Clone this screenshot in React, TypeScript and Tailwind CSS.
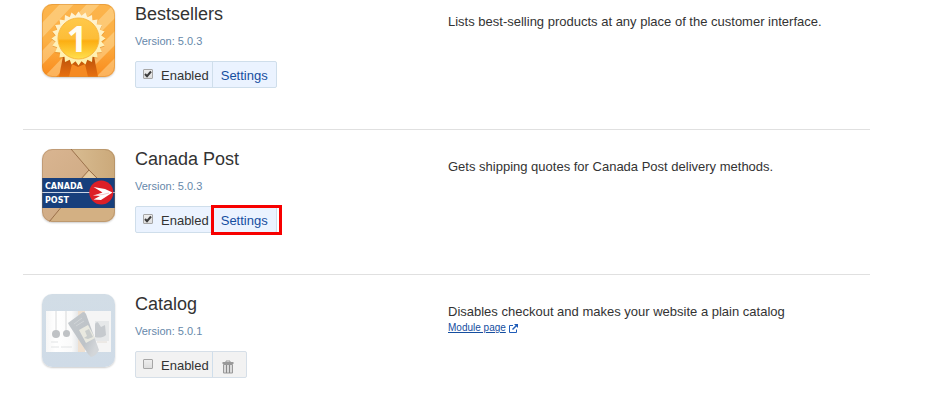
import React from "react";

type Module = {
  id: string;
  name: string;
  version: string;
  enabled: boolean;
  highlighted?: boolean;
  description: string;
  pageLink?: boolean;
  icon: React.ReactNode;
};

function starPoints(cx: number, cy: number, outer: number, inner: number, count: number) {
  const points: string[] = [];
  for (let i = 0; i < count * 2; i++) {
    const r = i % 2 === 0 ? outer : inner;
    const a = (Math.PI * i) / count - Math.PI / 2;
    points.push(`${(cx + r * Math.cos(a)).toFixed(2)},${(cy + r * Math.sin(a)).toFixed(2)}`);
  }
  return points.join(" ");
}

function BestsellersIcon() {
  return (
    <svg viewBox="0 0 73 73" className="block size-full" aria-hidden="true">
      <defs>
        <linearGradient id="bs-bg" x1="0" y1="0" x2="0" y2="1">
          <stop offset="0" stopColor="#fcb44c" />
          <stop offset="0.5" stopColor="#fcb044" />
          <stop offset="1" stopColor="#f98a1c" />
        </linearGradient>
        <linearGradient id="bs-disc" x1="0" y1="0" x2="0" y2="1">
          <stop offset="0" stopColor="#ffc94a" />
          <stop offset="0.5" stopColor="#fdbd38" />
          <stop offset="0.56" stopColor="#fcae12" />
          <stop offset="1" stopColor="#ffe04e" />
        </linearGradient>
        <linearGradient id="bs-star" x1="0" y1="0" x2="0" y2="1">
          <stop offset="0" stopColor="#fff3d6" />
          <stop offset="1" stopColor="#fff0a8" />
        </linearGradient>
        <linearGradient id="bs-ribbon" x1="0" y1="0" x2="0" y2="1">
          <stop offset="0" stopColor="#b9500a" />
          <stop offset="1" stopColor="#e8700f" />
        </linearGradient>
        <clipPath id="bs-clip">
          <rect width="73" height="73" rx="10" />
        </clipPath>
      </defs>
      <g clipPath="url(#bs-clip)">
        <rect width="73" height="73" fill="url(#bs-bg)" />
        <g fill="#ffe3a8" opacity="0.45">
          <path d="M0 0h7L0 8zM18 0h14L0 34V19zM45 0h13L0 61V47zM72 0h1v14L14 73H2zM73 27v14L41 73H27zM73 54v13l-6 6H54z" />
        </g>
        <path d="M21 52H52L56 73H17z" fill="url(#bs-ribbon)" />
        <path d="M30 60 36 63 43 60 46 73H27z" fill="#f58a22" />
        <polygon points={starPoints(36.5, 35.5, 27, 23, 24)} fill="#c76a05" opacity="0.35" />
        <polygon points={starPoints(36.5, 34.5, 27, 23, 24)} fill="url(#bs-star)" />
        <circle cx="36.5" cy="34.5" r="20.5" fill="url(#bs-disc)" stroke="#f9b840" strokeWidth="1" />
        <text x="35" y="47.5" textAnchor="middle" fontFamily="Open Sans, sans-serif" fontWeight="700" fontSize="36" fill="#fffdf3">
          1
        </text>
      </g>
      <rect x="0.5" y="0.5" width="72" height="72" rx="10" fill="none" stroke="#d98a2c" strokeOpacity="0.5" />
    </svg>
  );
}

function CanadaPostIcon() {
  return (
    <svg viewBox="0 0 73 73" className="block size-full" aria-hidden="true">
      <defs>
        <linearGradient id="cp-a" x1="0" y1="0" x2="1" y2="1">
          <stop offset="0" stopColor="#d9b591" />
          <stop offset="1" stopColor="#c9a47c" />
        </linearGradient>
        <linearGradient id="cp-b" x1="0" y1="0" x2="1" y2="0">
          <stop offset="0" stopColor="#dcc198" />
          <stop offset="1" stopColor="#cba97a" />
        </linearGradient>
        <clipPath id="cp-clip">
          <rect width="73" height="73" rx="10" />
        </clipPath>
      </defs>
      <g clipPath="url(#cp-clip)">
        <rect width="73" height="73" fill="url(#cp-a)" />
        <path d="M29 0H73V56H17L47 21z" fill="url(#cp-b)" />
        <path d="M7 73 21 56H73V73z" fill="#d3b083" />
        <path d="M29 0 47 21 38 31M7 73 21 56M47 21l9 9" stroke="#9b714b" strokeWidth="1" fill="none" />
        <path d="M40 30 47 22 55 30z" fill="#e5cba2" />
        <rect y="29" width="73" height="30" fill="#173f7c" />
        <rect y="43" width="73" height="1" fill="#c8d3e4" />
        <circle cx="59.3" cy="43.5" r="12" fill="#dd1f27" />
        <path d="M51.5 38 63 40 70.5 43.5 59 51 51.5 50.5 58 47 51.5 46.5 60.5 43.5z" fill="#fff" />
        <path d="M51.5 46.5 61 45.5 67 44" stroke="#e9a0a3" strokeWidth="0.6" fill="none" />
        <g fill="#fff" fontFamily="DejaVu Sans, sans-serif" fontWeight="700" fontSize="8">
          <text x="3" y="40">CANADA</text>
          <text x="3" y="54">POST</text>
        </g>
      </g>
      <rect x="0.5" y="0.5" width="72" height="72" rx="10" fill="none" stroke="#94704b" strokeOpacity="0.35" />
    </svg>
  );
}

function CatalogIcon() {
  return (
    <svg viewBox="0 0 73 73" className="block size-full" aria-hidden="true">
      <defs>
        <linearGradient id="ct-bg" x1="0" y1="0" x2="0" y2="1">
          <stop offset="0" stopColor="#d2dde6" />
          <stop offset="1" stopColor="#cfdbe7" />
        </linearGradient>
        <linearGradient id="ct-page" x1="0" y1="0" x2="1" y2="0">
          <stop offset="0" stopColor="#f6f6f6" />
          <stop offset="0.3" stopColor="#ffffff" />
          <stop offset="0.8" stopColor="#fafafa" />
          <stop offset="1" stopColor="#e6e8ea" />
        </linearGradient>
        <linearGradient id="ct-tube" x1="0" y1="0" x2="1" y2="0.6">
          <stop offset="0" stopColor="#c3c8cc" />
          <stop offset="0.7" stopColor="#bec3c8" />
          <stop offset="1" stopColor="#d3d6d9" />
        </linearGradient>
      </defs>
      <rect width="73" height="73" rx="10" fill="url(#ct-bg)" />
      <rect x="4" y="17" width="32" height="41" fill="url(#ct-page)" />
      <rect x="36" y="17" width="33" height="41" fill="#f5f5f5" />
      <rect x="36" y="17" width="7" height="41" fill="#efe0d0" />
      <rect x="53" y="27" width="14" height="20" fill="#e6e8e9" />
      <path d="M14 17V37M24 17V37" stroke="#d8d9da" strokeWidth="1" />
      <circle cx="14" cy="40" r="4" fill="#bfc2c5" />
      <circle cx="24.5" cy="39.5" r="3.5" fill="#bfc2c5" />
      <path d="M9 48h7M9 53h8m2 0h11" stroke="#e2e4e5" strokeWidth="1" />
      <path d="M53 31c0-3 3-4 4-1l2 3 4-2 1 10c-3 3-8 3-11 2z" fill="#c6cace" />
      <path d="M55 48h10" stroke="#e3ddd6" strokeWidth="1" />
      <path d="M26 29 41 18Q43 18 44 20L57 56Q54 62 49 63L46 60 27 31z" fill="url(#ct-tube)" />
      <path d="M37 36 46 31 53 44 44 49z" fill="#e9e9e0" />
      <path d="M43 37 47 35 51 43 46 45 42 44 45 42z" fill="#c9cdcc" />
      <path d="M32 30 40 24M34 32 42 27" stroke="#d0d4d7" strokeWidth="1" />
    </svg>
  );
}

function TrashIcon() {
  return (
    <svg viewBox="0 0 12 14" className="block h-[14px] w-[12px]" aria-hidden="true">
      <path d="M4 2V1h4v1" fill="none" stroke="#999" strokeWidth="1" />
      <rect x="0.5" y="2" width="11" height="2" fill="#999" />
      <path d="M1.5 4.5h9v8.5h-9z" fill="#dadada" stroke="#999" strokeWidth="1" />
      <path d="M4.5 5v8M7.5 5v8" stroke="#8a8a8a" strokeWidth="1" />
    </svg>
  );
}

function ExternalIcon() {
  return (
    <svg viewBox="0 0 9 9" className="block size-[9px]" fill="none" stroke="#1f5cb8" aria-hidden="true">
      <path d="M4 1.5H.5v7h7V5.5" />
      <path d="M3.5 5.5 7.5 1.5" strokeWidth="1.4" />
      <path d="M5 0h4v4z" fill="#1f5cb8" stroke="none" />
    </svg>
  );
}

const modules: Module[] = [
  {
    id: "bestsellers",
    name: "Bestsellers",
    version: "5.0.3",
    enabled: true,
    description: "Lists best-selling products at any place of the customer interface.",
    icon: <BestsellersIcon />,
  },
  {
    id: "canada-post",
    name: "Canada Post",
    version: "5.0.3",
    enabled: true,
    highlighted: true,
    description: "Gets shipping quotes for Canada Post delivery methods.",
    icon: <CanadaPostIcon />,
  },
  {
    id: "catalog",
    name: "Catalog",
    version: "5.0.1",
    enabled: false,
    description: "Disables checkout and makes your website a plain catalog",
    pageLink: true,
    icon: <CatalogIcon />,
  },
];

function EnabledToggle({ id, checked }: { id: string; checked: boolean }) {
  return (
    <label htmlFor={id} className="flex items-center gap-2 pt-0.5 pr-[3px] pl-[7px] text-[13px] leading-4">
      <span className="-mt-1 grid size-[10px] shrink-0">
        <input
          id={id}
          type="checkbox"
          defaultChecked={checked}
          className="peer col-start-1 row-start-1 size-[10px] appearance-none rounded-[1px] border border-[#a6a6a6] bg-linear-to-b from-[#eeeeee] to-[#dedede]"
        />
        <svg
          viewBox="0 0 10 10"
          className="pointer-events-none invisible col-start-1 row-start-1 size-[10px] peer-checked:visible"
          aria-hidden="true"
        >
          <path d="M2 5 4 7.2 8 2.5" fill="none" stroke="#3c3c3c" strokeWidth="2" />
        </svg>
      </span>
      Enabled
    </label>
  );
}

const highlightFrame =
  "after:pointer-events-none after:absolute after:-top-[2px] after:-right-[6px] after:-bottom-[3px] after:-left-[2px] after:border-3 after:border-[#f70000]";

function ModuleRow({ module }: { module: Module }) {
  const { id, name, version, enabled, highlighted, description, pageLink, icon } = module;
  return (
    <li className="flex border-t border-[#e0e0e0] pt-[19px] pb-[41px] pl-[19px] first:border-t-0 first:pt-1 last:pb-4">
      <div className="size-[73px] shrink-0 rounded-[10px] shadow-[0_1px_2px_rgba(0,0,0,0.2)]">{icon}</div>
      <div className="ml-5 w-[313px] shrink-0">
        <h2 className="text-[18px] leading-5 text-[#333]">{name}</h2>
        <p className="mt-[9px] text-[11px] leading-4 text-[#6688aa]">Version: {version}</p>
        <div
          className={`mt-3 flex h-[27px] w-fit rounded-[2px] border ${
            enabled ? "border-[#cfdeeb] bg-[#ebf3ff]" : "border-[#d6dfe8] bg-[#f2f2f2]"
          }`}
        >
          <EnabledToggle id={id} checked={enabled} />
          {enabled ? (
            <a
              href="#settings"
              className={`relative flex items-center border-l border-[#cfdeeb] px-2 pt-0.5 text-[13px] leading-4 text-[#154e9f] ${
                highlighted ? highlightFrame : ""
              }`}
            >
              Settings
            </a>
          ) : (
            <button
              type="button"
              aria-label="Uninstall"
              className="flex items-center border-l border-[#cfdeeb] pt-1 pr-3 pl-[9px]"
            >
              <TrashIcon />
            </button>
          )}
        </div>
      </div>
      <div className="min-w-0 flex-1 pt-[9px]">
        <p className="text-[13px] leading-[18px] text-[#333]">{description}</p>
        {pageLink && (
          <a href="#module-page" className="flex w-fit items-center gap-[3px] text-[10px] leading-[14px] text-[#154e9f]">
            <span className="underline">Module page</span>
            <ExternalIcon />
          </a>
        )}
      </div>
    </li>
  );
}

export default function App() {
  return (
    <main className="bg-white pr-20 pl-[23px] font-['Liberation_Sans',Arial,sans-serif] text-[#333]">
      <ul>
        {modules.map((module) => (
          <ModuleRow key={module.id} module={module} />
        ))}
      </ul>
    </main>
  );
}
